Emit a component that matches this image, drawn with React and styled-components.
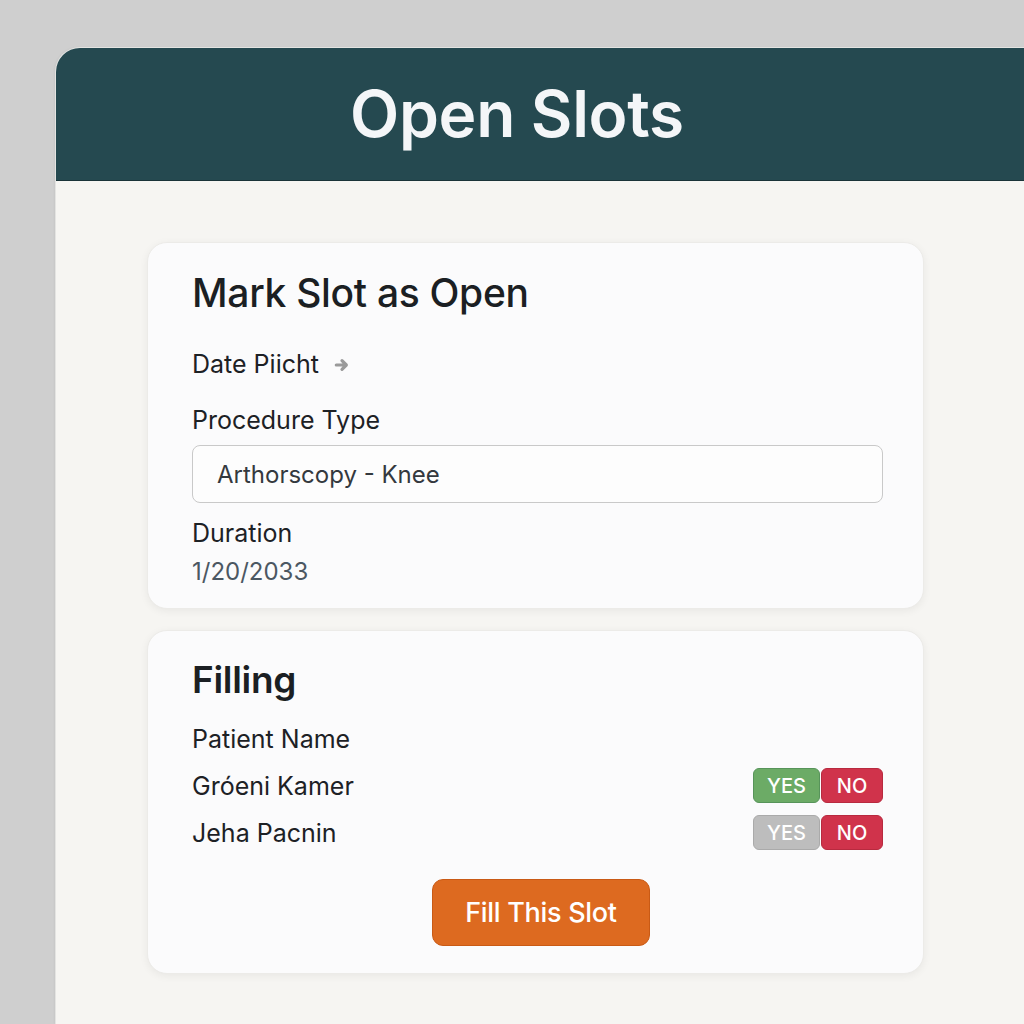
import React from 'react'
import styled, { createGlobalStyle } from 'styled-components'

const GlobalStyle = createGlobalStyle`
  html, body {
    margin: 0;
    padding: 0;
    background: #cfcfcf;
    overflow: hidden;
  }
  body {
    font-family: Inter, "Noto Sans", "Liberation Sans", sans-serif;
    color: #1d2125;
  }
`

const patients = [
  { name: 'Gróeni Kamer', yes: true },
  { name: 'Jeha Pacnin', yes: false },
]

export default function App () {
  return (
    <>
      <GlobalStyle />
      <StyledPage>
        <StyledPanel>
          <StyledHeader>
            <h1>Open Slots</h1>
          </StyledHeader>
          <StyledBody>
            <StyledCard $pad="28px 40px 21px 44px">
              <StyledCardTitle $size="39px">Mark Slot as Open</StyledCardTitle>
              <StyledLabel $mt="34px">
                Date Piicht
                <svg width="16" height="16" viewBox="0 0 14 14">
                  <path d="M2 7 H10.5 M7 3.2 L10.8 7 L7 10.8" fill="none" stroke="#9a9a9a" strokeWidth="2.8" strokeLinecap="round" strokeLinejoin="round" />
                </svg>
              </StyledLabel>
              <StyledLabel $mt="26px">Procedure Type</StyledLabel>
              <StyledField>Arthorscopy - Knee</StyledField>
              <StyledLabel $mt="15px">Duration</StyledLabel>
              <StyledValue>1/20/2033</StyledValue>
            </StyledCard>
            <StyledCard $pad="27px 40px 27px 44px">
              <StyledCardTitle $size="37px" $bold>Filling</StyledCardTitle>
              <StyledLabel $mt="22px">Patient Name</StyledLabel>
              <StyledRows>
                {patients.map((p) => (
                  <StyledRow key={p.name}>
                    <span>{p.name}</span>
                    <StyledToggle>
                      <StyledToggleButton $tone={p.yes ? 'green' : 'gray'} $w="67px">YES</StyledToggleButton>
                      <StyledToggleButton $tone="red" $w="62px">NO</StyledToggleButton>
                    </StyledToggle>
                  </StyledRow>
                ))}
              </StyledRows>
              <StyledActions>
                <StyledButton>Fill This Slot</StyledButton>
              </StyledActions>
            </StyledCard>
          </StyledBody>
        </StyledPanel>
      </StyledPage>
    </>
  )
}

const StyledPage = styled.div`
  height: 1024px;
  padding: 48px 0 0 56px;
  box-sizing: border-box;
`

const StyledPanel = styled.div`
  height: 100%;
  background: #f6f5f2;
  border-top-left-radius: 24px;
  overflow: hidden;
  box-shadow: 0 0 0 1px #e4e4e2, -1px 0 3px rgba(0, 0, 0, 0.08);
`

const StyledHeader = styled.header`
  height: 133px;
  background: #254950;
  border-bottom: 1px solid #1a3338;
  box-sizing: border-box;
  display: flex;
  align-items: center;
  justify-content: center;
  padding-right: 46px;
  h1 {
    margin: 0;
    color: #f4f6f8;
    font-size: 64px;
    font-weight: 600;
    letter-spacing: -0.3px;
    line-height: 1;
  }
`

const StyledBody = styled.main`
  display: flex;
  flex-direction: column;
  gap: 21px;
  padding: 61px 0 0 91px;
  width: 777px;
`

const StyledCard = styled.section`
  background: #fbfbfc;
  border-radius: 20px;
  border: 1px solid #ecebe8;
  box-shadow: 0 2px 8px rgba(0, 0, 0, 0.06);
  padding: ${(p) => p.$pad};
  display: flex;
  flex-direction: column;
`

const StyledCardTitle = styled.h2`
  margin: 0;
  font-size: ${(p) => p.$size};
  line-height: 44px;
  font-weight: ${(p) => (p.$bold ? 600 : 500)};
  letter-spacing: -0.3px;
  color: #1b1f23;
`

const StyledLabel = styled.div`
  margin-top: ${(p) => p.$mt || '0'};
  font-size: 25px;
  line-height: 30px;
  color: #1d2125;
  display: flex;
  align-items: center;
  gap: 15px;
  svg {
    margin-top: 2px;
  }
`

const StyledField = styled.div`
  margin-top: 10px;
  height: 58px;
  box-sizing: border-box;
  border: 1.5px solid #c9c9c9;
  border-radius: 8px;
  background: #fdfdfd;
  padding: 0 24px;
  display: flex;
  align-items: center;
  font-size: 24px;
  color: #34393e;
`

const StyledValue = styled.div`
  margin-top: 9px;
  font-size: 24px;
  line-height: 30px;
  color: #4b5762;
`

const StyledRows = styled.div`
  margin-top: 14px;
  display: flex;
  flex-direction: column;
  gap: 12px;
`

const StyledRow = styled.div`
  display: flex;
  align-items: center;
  justify-content: space-between;
  height: 35px;
  font-size: 25px;
  color: #1d2125;
`

const StyledToggle = styled.div`
  display: flex;
  gap: 1px;
`

const tones = {
  green: { bg: '#6cab66', border: '#57945a' },
  gray: { bg: '#bdbdbd', border: '#aaaaaa' },
  red: { bg: '#d0334b', border: '#b82a3f' },
}

const StyledToggleButton = styled.span`
  width: ${(p) => p.$w};
  height: 35px;
  box-sizing: border-box;
  display: flex;
  align-items: center;
  justify-content: center;
  border-radius: 6px;
  background: ${(p) => tones[p.$tone].bg};
  border: 1px solid ${(p) => tones[p.$tone].border};
  color: #fff;
  font-size: 20px;
  font-weight: 500;
`

const StyledActions = styled.div`
  margin-top: 29px;
  display: flex;
  justify-content: center;
  padding-left: 7px;
`

const StyledButton = styled.button`
  width: 218px;
  height: 67px;
  border: 1px solid #c95a15;
  border-radius: 11px;
  background: #dd6a20;
  color: #fff;
  font-family: inherit;
  font-size: 27px;
  font-weight: 500;
  letter-spacing: -0.3px;
  cursor: pointer;
`
